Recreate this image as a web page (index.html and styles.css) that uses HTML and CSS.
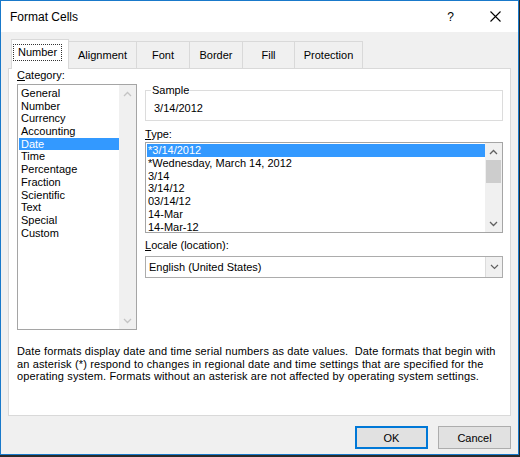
FILE: index.html
```html
<!DOCTYPE html>
<html>
<head>
<meta charset="utf-8">
<link rel="stylesheet" href="styles.css">
</head>
<body>
<div class="window">
  <div class="titlebar">
    <span class="title">Format Cells</span>
    <span class="tb-btn help">?</span>
    <span class="tb-btn close"><svg width="11" height="11" viewBox="0 0 11 11"><path d="M0.5 0.5 L10.5 10.5 M10.5 0.5 L0.5 10.5" stroke="#000" stroke-width="1.1" fill="none"/></svg></span>
  </div>
  <div class="content">
    <div class="tabs">
      <div class="tab active w-number"><span class="focus">Number</span></div>
      <div class="tab w-align">Alignment</div>
      <div class="tab w-font">Font</div>
      <div class="tab w-border">Border</div>
      <div class="tab w-fill">Fill</div>
      <div class="tab w-prot">Protection</div>
    </div>
    <div class="panel">
      <div class="cols">
        <div class="left">
          <div class="label"><u>C</u>ategory:</div>
          <div class="listbox cat">
            <ul class="items cat-items">
              <li>General</li>
              <li>Number</li>
              <li>Currency</li>
              <li>Accounting</li>
              <li class="sel">Date</li>
              <li>Time</li>
              <li>Percentage</li>
              <li>Fraction</li>
              <li>Scientific</li>
              <li>Text</li>
              <li>Special</li>
              <li>Custom</li>
            </ul>
            <div class="vscroll">
              <div class="arrow"><svg width="9" height="6" viewBox="0 0 9 6"><path d="M1 5 L4.5 1.5 L8 5" stroke="#c4c4c4" stroke-width="1.3" fill="none"/></svg></div>
              <div class="track"></div>
              <div class="arrow"><svg width="9" height="6" viewBox="0 0 9 6"><path d="M1 1 L4.5 4.5 L8 1" stroke="#c4c4c4" stroke-width="1.3" fill="none"/></svg></div>
            </div>
          </div>
        </div>
        <div class="right">
          <fieldset class="sample">
            <legend>Sample</legend>
            <div class="sample-value">3/14/2012</div>
          </fieldset>
          <div class="label type-label"><u>T</u>ype:</div>
          <div class="listbox type">
            <ul class="items type-items">
              <li class="sel">*3/14/2012</li>
              <li>*Wednesday, March 14, 2012</li>
              <li>3/14</li>
              <li>3/14/12</li>
              <li>03/14/12</li>
              <li>14-Mar</li>
              <li>14-Mar-12</li>
            </ul>
            <div class="vscroll">
              <div class="arrow"><svg width="9" height="6" viewBox="0 0 9 6"><path d="M1 5 L4.5 1.5 L8 5" stroke="#606060" stroke-width="1.3" fill="none"/></svg></div>
              <div class="track"><div class="thumb"></div></div>
              <div class="arrow"><svg width="9" height="6" viewBox="0 0 9 6"><path d="M1 1 L4.5 4.5 L8 1" stroke="#606060" stroke-width="1.3" fill="none"/></svg></div>
            </div>
          </div>
          <div class="label locale-label"><u>L</u>ocale (location):</div>
          <div class="select">
            <span class="select-text">English (United States)</span>
            <span class="dd"><svg width="9" height="6" viewBox="0 0 9 6"><path d="M1 1 L4.5 4.5 L8 1" stroke="#606060" stroke-width="1.2" fill="none"/></svg></span>
          </div>
        </div>
      </div>
      <p class="desc">Date formats display date and time serial numbers as date values.&nbsp; Date formats that begin with<br>an asterisk (*) respond to changes in regional date and time settings that are specified for the<br>operating system. Formats without an asterisk are not affected by operating system settings.</p>
    </div>
    <div class="buttons">
      <button class="btn default">OK</button>
      <button class="btn">Cancel</button>
    </div>
  </div>
</div>
</body>
</html>
```
FILE: styles.css
```css
* { box-sizing: border-box; }
html, body { margin: 0; padding: 0; }
body {
  width: 520px;
  height: 457px;
  background: #2a2a2a;
  font-family: "Liberation Sans", Arial, sans-serif;
  font-size: 11px;
  color: #000;
}
.window {
  width: 519px;
  height: 455px;
  border: 1px solid #1979ca;
  background: #f0f0f0;
  display: flex;
  flex-direction: column;
}
.titlebar {
  height: 31px;
  flex: none;
  background: #fff;
  display: flex;
  align-items: center;
  padding-left: 9px;
}
.title { font-size: 12px; }
.tb-btn {
  width: 45px;
  height: 31px;
  display: flex;
  align-items: center;
  justify-content: center;
}
.help { margin-left: auto; font-size: 12px; }
.content {
  flex: 1;
  padding: 7px 7px 0 7px;
  display: flex;
  flex-direction: column;
}
.tabs {
  display: flex;
  align-items: flex-end;
  height: 29px;
  padding-left: 3px;
  position: relative;
  z-index: 1;
}
.tab {
  height: 27px;
  border: 1px solid #d9d9d9;
  border-bottom: none;
  margin-left: -1px;
  background: #f0f0f0;
  display: flex;
  align-items: center;
  justify-content: center;
  padding-bottom: 1px;
}
.tab.active {
  height: 30px;
  margin-bottom: -1px;
  background: #fff;
  justify-content: flex-start;
  padding: 0 0 4px 1px;
  margin-left: 0;
}
.focus {
  border: 1px dotted #333;
  padding: 1px 4px 1px 4px;
  line-height: 13px;
}
.w-number { width: 58px; }
.w-align { width: 69px; }
.w-font { width: 54px; }
.w-border { width: 54px; }
.w-fill { width: 53px; }
.w-prot { width: 69px; }
.panel {
  height: 348px;
  flex: none;
  border: 1px solid #d9d9d9;
  background: #fff;
  padding: 0 0 0 8px;
}
.cols { display: flex; gap: 8px; }
.left { width: 120px; }
.right { width: 358px; padding-top: 15px; }
.label { line-height: 13px; height: 13px; }
.listbox {
  border: 1px solid #a5a5a5;
  display: flex;
  background: #fff;
}
.cat { height: 246px; margin-top: 2px; }
.items {
  list-style: none;
  margin: 0;
  flex: 1;
}
.cat-items { padding: 2px 0 0 1px; }
.cat-items li { line-height: 12.7px; height: 12.7px; padding-left: 2px; }
.items li.sel { background: #3399ff; color: #fff; }
.vscroll {
  width: 17px;
  background: #f0f0f0;
  display: flex;
  flex-direction: column;
}
.arrow {
  height: 17px;
  display: flex;
  align-items: center;
  justify-content: center;
}
.track { flex: 1; padding: 0 1px; }
.thumb { height: 23px; background: #cdcdcd; }
.sample {
  margin: 0;
  padding: 0 0 3px 7px;
  border: 1px solid #dcdcdc;
  height: 37px;
}
.sample legend {
  padding: 0 1px;
  margin-left: -2px;
  line-height: 13px;
}
.sample-value { padding: 5px 0 0 1px; line-height: 13px; }
.type-label { margin-top: 7px; }
.type { height: 91px; margin-top: 1px; }
.type-items { padding: 1px 0 0 1px; }
.type-items li { line-height: 12.8px; height: 12.8px; padding-left: 1px; white-space: nowrap; }
.locale-label { margin-top: 6px; }
.select {
  margin-top: 4px;
  height: 22px;
  border: 1px solid #acacac;
  display: flex;
  align-items: stretch;
}
.select-text { flex: 1; padding-left: 3px; display: flex; align-items: center; }
.dd {
  width: 17px;
  background: #f0f0f0;
  border-left: 1px solid #dcdcdc;
  display: flex;
  align-items: center;
  justify-content: center;
}
.desc {
  margin: 15px 0 0 0;
  line-height: 12.5px;
  letter-spacing: 0.14px;
  white-space: nowrap;
}
.buttons {
  display: flex;
  justify-content: flex-end;
  gap: 10px;
  margin-top: 10px;
}
.btn {
  width: 73px;
  height: 23px;
  font-family: "Liberation Sans", Arial, sans-serif;
  font-size: 11px;
  color: #000;
  background: #e1e1e1;
  border: 1px solid #adadad;
  padding: 0;
}
.btn.default { border: 2px solid #0078d7; }
```
